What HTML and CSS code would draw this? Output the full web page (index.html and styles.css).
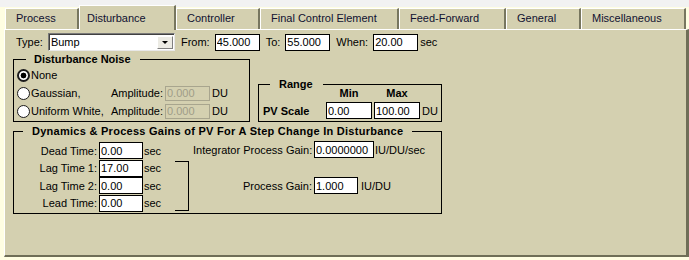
FILE: index.html
```html
<!DOCTYPE html>
<html>
	<head>
		<link rel="stylesheet" href="styles.css">
	</head>
	<body>
		<div class="tabctl">
			<div class="tabs">
				<div class="tab">Process</div>
				<div class="tab active">Disturbance</div>
				<div class="tab">Controller</div>
				<div class="tab">Final Control Element</div>
				<div class="tab">Feed-Forward</div>
				<div class="tab">General</div>
				<div class="tab">Miscellaneous</div>
			</div>
			<div class="panel">
				<div class="typerow">
					<span class="lbl">Type:</span>
					<div class="select ctl"><span>Bump</span><span class="dd"></span></div>
					<span class="lbl">From:</span>
					<input class="txt ctl" value="45.000">
					<span class="lbl">To:</span>
					<input class="txt ctl" value="55.000">
					<span class="lbl">When:</span>
					<input class="txt sec-in" value="20.00">
					<span>sec</span>
				</div>
				<div class="mid">
					<fieldset class="noise">
						<legend>Disturbance Noise</legend>
						<div class="noisegrid">
							<label class="opt"><input type="radio" name="noise" checked>None</label>
							<span></span><span></span><span></span>
							<label class="opt"><input type="radio" name="noise">Gaussian,</label>
							<span>Amplitude:</span>
							<input class="txt off" value="0.000" disabled>
							<span class="du">DU</span>
							<label class="opt"><input type="radio" name="noise">Uniform White,</label>
							<span>Amplitude:</span>
							<input class="txt off" value="0.000" disabled>
							<span class="du">DU</span>
						</div>
					</fieldset>
					<fieldset class="range">
						<legend>Range</legend>
						<div class="rangegrid">
							<span></span>
							<b class="head">Min</b>
							<b class="head">Max</b>
							<span></span>
							<b>PV Scale</b>
							<input class="txt" value="0.00">
							<input class="txt" value="100.00">
							<span>DU</span>
						</div>
					</fieldset>
				</div>
				<fieldset class="dyn">
					<legend>Dynamics &amp; Process Gains of PV For A Step Change In Disturbance</legend>
					<div class="dynbody">
						<div class="times">
							<span class="rl">Dead Time:</span><input class="txt" value="0.00"><span>sec</span>
							<span class="rl">Lag Time 1:</span><input class="txt" value="17.00"><span>sec</span>
							<span class="rl">Lag Time 2:</span><input class="txt" value="0.00"><span>sec</span>
							<span class="rl">Lead Time:</span><input class="txt" value="0.00"><span>sec</span>
						</div>
						<div class="bracket"></div>
						<div class="gains">
							<span class="rl">Integrator Process Gain:</span>
							<div class="cell"><input class="txt wide" value="0.0000000"><span>IU/DU/sec</span></div>
							<span class="rl">Process Gain:</span>
							<div class="cell"><input class="txt" value="1.000"><span class="unit">IU/DU</span></div>
						</div>
					</div>
				</fieldset>
			</div>
		</div>
	</body>
</html>
```

FILE: styles.css
```css
body{
	margin:0;
	width:689px;
	height:260px;
	overflow:hidden;
	background:linear-gradient(#f2f2f2 0 7px, #fffee2 7px);
	font:11px "Liberation Sans", Arial, sans-serif;
	color:#000;
}
.tabctl{
	margin-left:4px;
	padding-top:5px;
}
.tabs{
	display:grid;
	grid-template-columns:74px 97px 84px 139px 107px 75px 105px;
	height:24px;
	align-items:end;
	margin-left:1px;
}
.tab{
	box-sizing:border-box;
	height:21px;
	line-height:19px;
	padding-left:10px;
	background:#d4d0b0;
	border-top:1px solid #fff;
	border-left:1px solid #fff;
	border-right:2px solid #77765f;
	white-space:nowrap;
	color:#101030;
}
.tab.active{
	height:25px;
	padding-top:3px;
	padding-left:7px;
	margin-bottom:-1px;
	position:relative;
	z-index:1;
}
.panel{
	box-sizing:border-box;
	height:228px;
	background:#d4d0b0;
	border-top:1px solid #fff;
	border-left:1px solid #fff;
	border-right:3px solid #6f6e57;
	border-bottom:2px solid #6f6e57;
	padding-left:8px;
}
.txt{
	box-sizing:border-box;
	height:17px;
	width:44px;
	margin:0;
	padding:0 1px;
	border:1px solid #000;
	background:#fff;
	font:11px "Liberation Sans", Arial, sans-serif;
	color:#000;
	outline:none;
}
.txt.off{
	height:15px;
	width:45px;
	background:#d4d0b0;
	border-color:#a8a58e;
	color:#a09d88;
}
.typerow{
	display:flex;
	align-items:center;
	height:18px;
	margin-top:3px;
	padding-left:3px;
}
.lbl{
	margin-right:5px;
}
.ctl{
	margin-right:6px;
}
.typerow .txt{
	width:45px;
}
.sec-in{
	margin-right:2px;
}
.select{
	box-sizing:border-box;
	width:127px;
	height:18px;
	display:flex;
	align-items:center;
	justify-content:space-between;
	background:#fff;
	border:1px solid;
	border-color:#7a7a7a #e8e8e8 #e8e8e8 #7a7a7a;
	box-shadow:inset 1px 1px 0 #404040;
	padding-left:2px;
}
.dd{
	box-sizing:border-box;
	width:16px;
	height:13px;
	margin-right:1px;
	margin-top:1px;
	background:#ecebe4;
	border:1px solid;
	border-color:#fff #808080 #808080 #fff;
	display:flex;
	align-items:center;
	justify-content:center;
}
.dd::after{
	content:"";
	border-left:3px solid transparent;
	border-right:3px solid transparent;
	border-top:3px solid #000;
}
fieldset{
	margin:0;
	padding:0;
	min-width:0;
	border:1px solid #000;
	box-sizing:border-box;
}
legend{
	font-weight:bold;
	line-height:14px;
	margin-left:9px;
	padding:0 9px 0 8px;
}
.mid{
	display:flex;
	align-items:flex-end;
	margin-top:1px;
}
.noise{
	width:237px;
	padding:0 0 1px 3px;
}
.noisegrid{
	display:grid;
	grid-template-columns:94px 54px 46px auto;
	grid-auto-rows:18px;
	align-items:center;
}
.opt{
	display:flex;
	align-items:center;
	white-space:nowrap;
}
.opt input{
	appearance:none;
	-webkit-appearance:none;
	box-sizing:border-box;
	width:13px;
	height:13px;
	margin:0 1px 0 0;
	border-radius:50%;
	border:1px solid #1c1c1c;
	background:#fff;
}
.opt input:checked{
	border-width:2px;
	background:radial-gradient(circle, #000 0 2.6px, #fff 3.2px);
}
.du{
	padding-left:1px;
}
.range{
	width:184px;
	margin-left:8px;
	padding:0 0 2px 4px;
}
.range legend{
	margin-left:7px;
	padding:0 10px 0 9px;
}
.rangegrid{
	display:grid;
	grid-template-columns:63px 48px 48px auto;
	grid-template-rows:10px 17px;
	row-gap:4px;
	align-items:center;
	margin-top:-3px;
}
.rangegrid .txt{
	width:46px;
}
.head{
	width:46px;
	text-align:center;
	line-height:10px;
}
.dyn{
	width:429px;
	margin-top:2px;
	padding:4px 0 1px 0;
}
.dyn legend{
	padding:0 9px;
	letter-spacing:0.27px;
}
.dynbody{
	display:flex;
	align-items:flex-start;
}
.times{
	display:grid;
	grid-template-columns:85px 45px 31px;
	grid-auto-rows:17.5px;
	align-items:center;
}
.rl{
	text-align:right;
	padding-right:2px;
	white-space:nowrap;
}
.bracket{
	width:13px;
	height:48px;
	margin-top:19px;
	border:1px solid #000;
	border-left:none;
}
.gains{
	display:grid;
	grid-template-columns:121px auto;
	grid-template-rows:17px 17px;
	row-gap:19px;
	align-items:center;
	margin-left:4px;
	margin-top:-1px;
}
.cell{
	display:flex;
	align-items:center;
}
.txt.wide{
	width:60px;
	margin-right:1px;
}
.unit{
	margin-left:3px;
}
```
